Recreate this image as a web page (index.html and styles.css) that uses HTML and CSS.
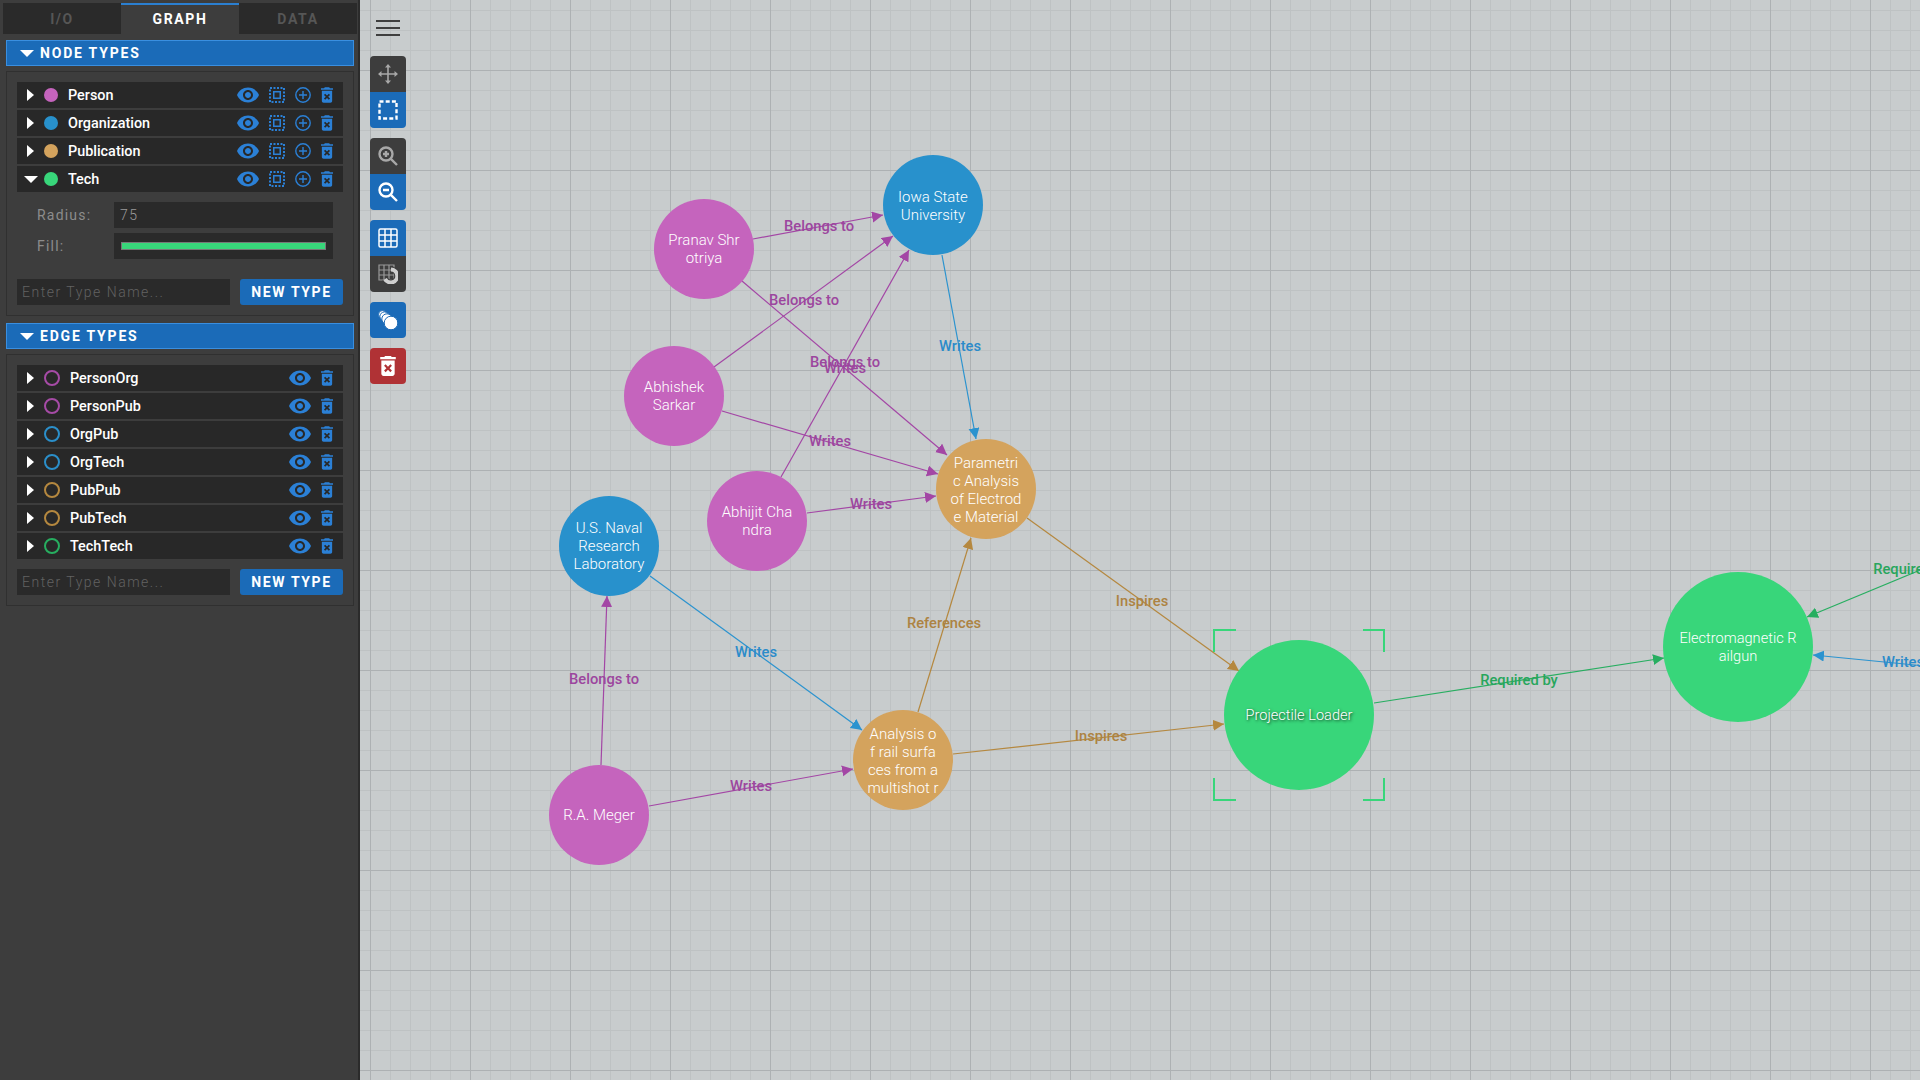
FILE: index.html
```html
<!DOCTYPE html>
<html lang="en">
<head>
    <meta charset="UTF-8">
    <meta name="viewport" content="width=device-width, initial-scale=1.0">
    <title>Graph Editor</title>
    <link rel="stylesheet" href="styles.css">
</head>
<body>
  <svg class="sprite" aria-hidden="true">
    <symbol id="i-eye" viewBox="1 4 22 16">
      <path d="M12 4.5C7 4.5 2.73 7.61 1 12c1.73 4.39 6 7.5 11 7.5s9.27-3.11 11-7.5c-1.73-4.39-6-7.5-11-7.5zM12 17c-2.76 0-5-2.24-5-5s2.24-5 5-5 5 2.24 5 5-2.24 5-5 5zm0-8c-1.66 0-3 1.34-3 3s1.34 3 3 3 3-1.34 3-3-1.34-3-3-3z"/>
    </symbol>
    <symbol id="i-focus" viewBox="0 0 16 16">
      <rect x="1" y="1" width="14" height="14" fill="none" stroke="currentColor" stroke-width="2" stroke-dasharray="2 1.5"/>
      <rect x="4.75" y="4.75" width="6.5" height="6.5" fill="none" stroke="currentColor" stroke-width="1.5"/>
    </symbol>
    <symbol id="i-plus" viewBox="0 0 16 16">
      <circle cx="8" cy="8" r="7.2" fill="none" stroke="currentColor" stroke-width="1.4"/>
      <path d="M8 4v8M4 8h8" fill="none" stroke="currentColor" stroke-width="1.4"/>
    </symbol>
    <symbol id="i-trash" viewBox="5 3 14 18">
      <path fill-rule="evenodd" d="M6 19c0 1.1.9 2 2 2h8c1.1 0 2-.9 2-2V7H6v12zm2.46-7.12l1.41-1.41L12 12.59l2.12-2.12 1.41 1.41L13.41 14l2.12 2.12-1.41 1.41L12 15.41l-2.12 2.12-1.41-1.41L10.59 14l-2.13-2.12zM15.5 4l-1-1h-5l-1 1H5v2h14V4z"/>
    </symbol>
  </svg>

  <aside class="panel">
    <div class="tabs">
      <div class="tab">I/O</div>
      <div class="tab active">GRAPH</div>
      <div class="tab">DATA</div>
    </div>

    <div class="section-head"><span class="caret-down"></span>NODE TYPES</div>
    <div class="group">
      <div class="rows">
        <div class="type-row">
          <span class="caret-box"><span class="caret-right"></span></span>
          <span class="dot person"></span><span class="type-name">Person</span>
          <div class="row-icons">
            <svg class="ic-eye"><use href="#i-eye"/></svg><svg class="ic-16"><use href="#i-focus"/></svg><svg class="ic-16"><use href="#i-plus"/></svg><svg class="ic-trash"><use href="#i-trash"/></svg>
          </div>
        </div>
        <div class="type-row">
          <span class="caret-box"><span class="caret-right"></span></span>
          <span class="dot org"></span><span class="type-name">Organization</span>
          <div class="row-icons">
            <svg class="ic-eye"><use href="#i-eye"/></svg><svg class="ic-16"><use href="#i-focus"/></svg><svg class="ic-16"><use href="#i-plus"/></svg><svg class="ic-trash"><use href="#i-trash"/></svg>
          </div>
        </div>
        <div class="type-row">
          <span class="caret-box"><span class="caret-right"></span></span>
          <span class="dot pub"></span><span class="type-name">Publication</span>
          <div class="row-icons">
            <svg class="ic-eye"><use href="#i-eye"/></svg><svg class="ic-16"><use href="#i-focus"/></svg><svg class="ic-16"><use href="#i-plus"/></svg><svg class="ic-trash"><use href="#i-trash"/></svg>
          </div>
        </div>
        <div class="type-row">
          <span class="caret-box"><span class="caret-down small"></span></span>
          <span class="dot tech"></span><span class="type-name">Tech</span>
          <div class="row-icons">
            <svg class="ic-eye"><use href="#i-eye"/></svg><svg class="ic-16"><use href="#i-focus"/></svg><svg class="ic-16"><use href="#i-plus"/></svg><svg class="ic-trash"><use href="#i-trash"/></svg>
          </div>
        </div>
      </div>

      <div class="prop-row first">
        <label class="prop-label">Radius:</label>
        <input class="prop-input" type="text" value="75">
      </div>
      <div class="prop-row">
        <label class="prop-label">Fill:</label>
        <div class="prop-input swatch"><div class="swatch-bar"></div></div>
      </div>

      <div class="new-type">
        <input class="name-input" type="text" placeholder="Enter Type Name...">
        <button class="new-btn">NEW TYPE</button>
      </div>
    </div>

    <div class="section-head second"><span class="caret-down"></span>EDGE TYPES</div>
    <div class="group">
      <div class="rows">
        <div class="type-row">
          <span class="caret-box"><span class="caret-right"></span></span>
          <span class="ring e-person"></span><span class="type-name">PersonOrg</span>
          <div class="row-icons"><svg class="ic-eye"><use href="#i-eye"/></svg><svg class="ic-trash"><use href="#i-trash"/></svg></div>
        </div>
        <div class="type-row">
          <span class="caret-box"><span class="caret-right"></span></span>
          <span class="ring e-person"></span><span class="type-name">PersonPub</span>
          <div class="row-icons"><svg class="ic-eye"><use href="#i-eye"/></svg><svg class="ic-trash"><use href="#i-trash"/></svg></div>
        </div>
        <div class="type-row">
          <span class="caret-box"><span class="caret-right"></span></span>
          <span class="ring e-org"></span><span class="type-name">OrgPub</span>
          <div class="row-icons"><svg class="ic-eye"><use href="#i-eye"/></svg><svg class="ic-trash"><use href="#i-trash"/></svg></div>
        </div>
        <div class="type-row">
          <span class="caret-box"><span class="caret-right"></span></span>
          <span class="ring e-org"></span><span class="type-name">OrgTech</span>
          <div class="row-icons"><svg class="ic-eye"><use href="#i-eye"/></svg><svg class="ic-trash"><use href="#i-trash"/></svg></div>
        </div>
        <div class="type-row">
          <span class="caret-box"><span class="caret-right"></span></span>
          <span class="ring e-pub"></span><span class="type-name">PubPub</span>
          <div class="row-icons"><svg class="ic-eye"><use href="#i-eye"/></svg><svg class="ic-trash"><use href="#i-trash"/></svg></div>
        </div>
        <div class="type-row">
          <span class="caret-box"><span class="caret-right"></span></span>
          <span class="ring e-pub"></span><span class="type-name">PubTech</span>
          <div class="row-icons"><svg class="ic-eye"><use href="#i-eye"/></svg><svg class="ic-trash"><use href="#i-trash"/></svg></div>
        </div>
        <div class="type-row">
          <span class="caret-box"><span class="caret-right"></span></span>
          <span class="ring e-tech"></span><span class="type-name">TechTech</span>
          <div class="row-icons"><svg class="ic-eye"><use href="#i-eye"/></svg><svg class="ic-trash"><use href="#i-trash"/></svg></div>
        </div>
      </div>

      <div class="new-type near">
        <input class="name-input" type="text" placeholder="Enter Type Name...">
        <button class="new-btn">NEW TYPE</button>
      </div>
    </div>
  </aside>

  <main class="canvas">
    <!-- viewBox starts at the panel edge so the graph uses page coordinates -->
    <svg class="graph" viewBox="360 0 1560 1080">
      <defs>
        <marker id="arrow-person" markerUnits="userSpaceOnUse" markerWidth="12" markerHeight="12" refX="11" refY="5.5" orient="auto"><path class="m-person" d="M0 0L11 5.5L0 11z"/></marker>
        <marker id="arrow-org" markerUnits="userSpaceOnUse" markerWidth="12" markerHeight="12" refX="11" refY="5.5" orient="auto"><path class="m-org" d="M0 0L11 5.5L0 11z"/></marker>
        <marker id="arrow-pub" markerUnits="userSpaceOnUse" markerWidth="12" markerHeight="12" refX="11" refY="5.5" orient="auto"><path class="m-pub" d="M0 0L11 5.5L0 11z"/></marker>
        <marker id="arrow-tech" markerUnits="userSpaceOnUse" markerWidth="12" markerHeight="12" refX="11" refY="5.5" orient="auto"><path class="m-tech" d="M0 0L11 5.5L0 11z"/></marker>
      </defs>

      <!-- edges -->
      <line class="edge person" x1="753" y1="239" x2="883" y2="215" marker-end="url(#arrow-person)"/>
      <line class="edge person" x1="714" y1="367" x2="893" y2="236" marker-end="url(#arrow-person)"/>
      <line class="edge person" x1="742" y1="281" x2="947" y2="455" marker-end="url(#arrow-person)"/>
      <line class="edge person" x1="781" y1="477" x2="909" y2="250" marker-end="url(#arrow-person)"/>
      <line class="edge org" x1="942" y1="255" x2="976" y2="439" marker-end="url(#arrow-org)"/>
      <line class="edge person" x1="722" y1="411" x2="938" y2="474" marker-end="url(#arrow-person)"/>
      <line class="edge person" x1="807" y1="513" x2="936" y2="496" marker-end="url(#arrow-person)"/>
      <line class="edge org" x1="650" y1="576" x2="862" y2="730" marker-end="url(#arrow-org)"/>
      <line class="edge person" x1="601" y1="765" x2="607" y2="596" marker-end="url(#arrow-person)"/>
      <line class="edge person" x1="649" y1="806" x2="853" y2="769" marker-end="url(#arrow-person)"/>
      <line class="edge pub" x1="918" y1="712" x2="971" y2="538" marker-end="url(#arrow-pub)"/>
      <line class="edge pub" x1="953" y1="754" x2="1224" y2="724" marker-end="url(#arrow-pub)"/>
      <line class="edge pub" x1="1027" y1="518" x2="1239" y2="671" marker-end="url(#arrow-pub)"/>
      <line class="edge tech" x1="1374" y1="703" x2="1664" y2="658" marker-end="url(#arrow-tech)"/>
      <line class="edge tech" x1="1925" y1="568" x2="1807" y2="617" marker-end="url(#arrow-tech)"/>
      <line class="edge org" x1="1925" y1="666" x2="1813" y2="655" marker-end="url(#arrow-org)"/>

      <!-- edge labels -->
      <text class="edge-label person" x="819" y="231">Belongs to</text>
      <text class="edge-label person" x="804" y="305">Belongs to</text>
      <text class="edge-label person" x="845" y="373">Writes</text>
      <text class="edge-label person" x="845" y="367">Belongs to</text>
      <text class="edge-label org" x="960" y="351">Writes</text>
      <text class="edge-label person" x="830" y="446">Writes</text>
      <text class="edge-label person" x="871" y="509">Writes</text>
      <text class="edge-label org" x="756" y="657">Writes</text>
      <text class="edge-label person" x="604" y="684">Belongs to</text>
      <text class="edge-label person" x="751" y="791">Writes</text>
      <text class="edge-label pub" x="944" y="628">References</text>
      <text class="edge-label pub" x="1101" y="741">Inspires</text>
      <text class="edge-label pub" x="1142" y="606">Inspires</text>
      <text class="edge-label tech" x="1519" y="685">Required by</text>
      <text class="edge-label tech" x="1912" y="574">Required by</text>
      <text class="edge-label org" x="1903" y="667">Writes</text>

      <!-- nodes -->
      <circle class="node org" cx="933" cy="205" r="50"/>
      <text class="node-label"><tspan x="933" y="202">Iowa State</tspan><tspan x="933" y="220">University</tspan></text>

      <circle class="node person" cx="704" cy="249" r="50"/>
      <text class="node-label"><tspan x="704" y="245">Pranav Shr</tspan><tspan x="704" y="263">otriya</tspan></text>

      <circle class="node person" cx="674" cy="396" r="50"/>
      <text class="node-label"><tspan x="674" y="392">Abhishek</tspan><tspan x="674" y="410">Sarkar</tspan></text>

      <circle class="node person" cx="757" cy="521" r="50"/>
      <text class="node-label"><tspan x="757" y="517">Abhijit Cha</tspan><tspan x="757" y="535">ndra</tspan></text>

      <circle class="node org" cx="609" cy="546" r="50"/>
      <text class="node-label"><tspan x="609" y="533">U.S. Naval</tspan><tspan x="609" y="551">Research</tspan><tspan x="609" y="569">Laboratory</tspan></text>

      <circle class="node pub" cx="986" cy="489" r="50"/>
      <text class="node-label"><tspan x="986" y="468">Parametri</tspan><tspan x="986" y="486">c Analysis</tspan><tspan x="986" y="504">of Electrod</tspan><tspan x="986" y="522">e Material</tspan></text>

      <circle class="node pub" cx="903" cy="760" r="50"/>
      <text class="node-label"><tspan x="903" y="739">Analysis o</tspan><tspan x="903" y="757">f rail surfa</tspan><tspan x="903" y="775">ces from a</tspan><tspan x="903" y="793">multishot r</tspan></text>

      <circle class="node person" cx="599" cy="815" r="50"/>
      <text class="node-label"><tspan x="599" y="820">R.A. Meger</tspan></text>

      <circle class="node tech" cx="1299" cy="715" r="75"/>
      <text class="node-label selected"><tspan x="1299" y="720">Projectile Loader</tspan></text>

      <circle class="node tech" cx="1738" cy="647" r="75"/>
      <text class="node-label tech-name"><tspan x="1738" y="643">Electromagnetic R</tspan><tspan x="1738" y="661">ailgun</tspan></text>

      <!-- selection corners -->
      <path class="select-box" d="M1214 652v-22h22M1363 630h21v22M1214 778v22h22M1363 800h21v-22"/>
    </svg>

    <div class="toolbar">
      <div class="menu-btn"><span></span><span></span><span></span></div>

      <div class="tool-group">
        <div class="tool">
          <svg viewBox="0 0 20 20" width="20" height="20" class="grey-stroke"><path d="M10 2v16M2 10h16"/><path class="solid" d="M10 0l3 3.5H7zM10 20l3-3.5H7zM0 10l3.5-3v6zM20 10l-3.5-3v6z"/></svg>
        </div>
        <div class="tool on">
          <svg viewBox="0 0 20 20" width="20" height="20"><rect class="white-dash" x="1.5" y="1.5" width="17" height="17"/></svg>
        </div>
      </div>

      <div class="tool-group">
        <div class="tool">
          <svg viewBox="0 0 20 20" width="20" height="20" class="grey-stroke thick"><circle cx="8" cy="8" r="6.5"/><path d="M12.6 12.6L19 19M5 8h6M8 5v6"/></svg>
        </div>
        <div class="tool on">
          <svg viewBox="0 0 20 20" width="20" height="20" class="white-stroke thick"><circle cx="8" cy="8" r="6.5"/><path d="M12.6 12.6L19 19M5 8h6"/></svg>
        </div>
      </div>

      <div class="tool-group">
        <div class="tool on">
          <svg viewBox="0 0 20 20" width="20" height="20" class="white-stroke"><rect x="1" y="1" width="18" height="18" rx="1.5"/><path d="M7 1v18M13 1v18M1 7h18M1 13h18"/></svg>
        </div>
        <div class="tool">
          <svg viewBox="0 0 20 20" width="20" height="20"><path class="snap-grid" d="M1 1h15v15H1zM6 1v15M11 1v15M1 6h15M1 11h15"/><path class="snap-halo" d="M13 5.5A6.5 6.5 0 1 1 7 15"/><path class="snap-magnet" d="M13 5.5A6.5 6.5 0 1 1 7 15"/></svg>
        </div>
      </div>

      <div class="tool-group">
        <div class="tool on single">
          <svg viewBox="0 0 24 24" width="24" height="24" class="stack"><circle cx="6.5" cy="6.5" r="4"/><circle cx="8.5" cy="8.5" r="4.6"/><circle cx="11" cy="11" r="5.2"/><circle cx="15" cy="15" r="6.8"/></svg>
        </div>
      </div>

      <div class="tool-group">
        <div class="tool danger single">
          <svg width="16" height="20" class="white-fill"><use href="#i-trash"/></svg>
        </div>
      </div>
    </div>
  </main>
</body>
</html>
```

FILE: styles.css
```css
* {
  box-sizing: border-box;
}
html, body {
  height: 100%;
}
body {
  margin: 0;
  display: flex;
  overflow: hidden;
  font-family: Roboto, "Liberation Sans", sans-serif;
  background-color: #c8cccd;
}
.sprite {
  display: none;
}

/* left panel */
.panel {
  width: 360px;
  flex: none;
  height: 100%;
  background-color: #3d3d3d;
  border-right: 2px solid #2b2b2b;
}
.tabs {
  display: flex;
  height: 34px;
  padding: 3px 1px 0 3px;
  background-color: #3d3d3d;
}
.tab {
  width: 118px;
  background-color: #2a2a2a;
  color: #565656;
  font-size: 14px;
  font-weight: 700;
  letter-spacing: 1.6px;
  line-height: 32px;
  text-align: center;
}
.tab.active {
  background-color: #3d3d3d;
  border-top: 2px solid #2b7fd0;
  color: #fff;
  line-height: 29px;
}
.section-head {
  display: flex;
  align-items: center;
  height: 26px;
  margin: 6px 4px 0 6px;
  padding-left: 13px;
  background-color: #1b6bb8;
  border: 1px solid #3a8fe0;
  color: #fff;
  font-size: 14px;
  font-weight: 700;
  letter-spacing: 1.8px;
}
.section-head.second {
  margin-top: 7px;
}
.section-head .caret-down {
  margin-right: 6px;
}
.caret-down {
  display: inline-block;
  width: 0;
  height: 0;
  border-left: 7px solid transparent;
  border-right: 7px solid transparent;
  border-top: 7px solid #fff;
}
.caret-right {
  display: inline-block;
  width: 0;
  height: 0;
  border-top: 6px solid transparent;
  border-bottom: 6px solid transparent;
  border-left: 7px solid #fff;
}
.group {
  margin: 5px 4px 0 6px;
  padding: 10px;
  border: 1px solid #303030;
}
.rows {
  display: flex;
  flex-direction: column;
  gap: 2px;
}
.type-row {
  display: flex;
  align-items: center;
  height: 26px;
  background-color: #282828;
  padding-right: 10px;
}
.caret-box {
  display: flex;
  justify-content: center;
  align-items: center;
  width: 27px;
  flex: none;
}
.dot {
  width: 14px;
  height: 14px;
  border-radius: 50%;
}
.dot.person { background-color: #c564bd; }
.dot.org { background-color: #2891cc; }
.dot.pub { background-color: #d4a35d; }
.dot.tech { background-color: #38d67a; }
.ring {
  width: 16px;
  height: 16px;
  border-radius: 50%;
  border: 2px solid;
}
.ring.e-person { border-color: #a64ba6; }
.ring.e-org { border-color: #2b8fca; }
.ring.e-pub { border-color: #b5883f; }
.ring.e-tech { border-color: #27ae60; }
.type-name {
  margin-left: 10px;
  color: #fff;
  font-size: 14.4px;
  font-weight: 500;
}
.row-icons {
  display: flex;
  align-items: center;
  gap: 10px;
  margin-left: auto;
  color: #2b80d6;
}
.row-icons svg {
  fill: currentColor;
}
.ic-eye {
  width: 22px;
  height: 16px;
}
.ic-16 {
  width: 16px;
  height: 16px;
}
.ic-trash {
  width: 12px;
  height: 16px;
}
.prop-row {
  display: flex;
  align-items: center;
  margin-top: 5px;
  padding: 0 10px 0 20px;
}
.prop-row.first {
  margin-top: 10px;
}
.prop-label {
  width: 77px;
  flex: none;
  color: #8c8c8c;
  font-size: 14px;
  letter-spacing: 1.2px;
}
.prop-input {
  width: 219px;
  height: 26px;
  padding: 0 6px;
  background-color: #2a2a2a;
  border: 0;
  color: #9a9a9a;
  font-family: inherit;
  font-size: 14px;
  font-weight: 300;
  letter-spacing: 1.4px;
}
.swatch {
  display: flex;
  align-items: center;
  padding: 0 7px;
}
.swatch-bar {
  width: 100%;
  height: 8px;
  background-color: #38d67a;
  border: 1px solid #777;
}
.new-type {
  display: flex;
  gap: 10px;
  margin-top: 20px;
}
.new-type.near {
  margin-top: 10px;
}
.name-input {
  width: 213px;
  height: 26px;
  padding: 0 5px;
  background-color: #2a2a2a;
  border: 0;
  color: #ccc;
  font-family: inherit;
  font-size: 14px;
  font-weight: 300;
  letter-spacing: 1.5px;
}
.name-input::placeholder {
  color: #626262;
  opacity: 1;
}
.new-btn {
  width: 103px;
  height: 26px;
  padding: 0;
  background-color: #1b6bb8;
  border: 0;
  border-radius: 3px;
  color: #fff;
  font-family: inherit;
  font-size: 14px;
  font-weight: 700;
  letter-spacing: 1.6px;
}

/* graph canvas */
.canvas {
  position: relative;
  flex: 1;
  height: 100%;
  padding: 20px 10px;
  background-color: #c8cccd;
  background-image:
    linear-gradient(to right, #adb1b3 1px, transparent 1px),
    linear-gradient(to bottom, #adb1b3 1px, transparent 1px),
    linear-gradient(to right, #bec2c3 1px, transparent 1px),
    linear-gradient(to bottom, #bec2c3 1px, transparent 1px);
  background-size: 100px 100px, 100px 100px, 20px 20px, 20px 20px;
  background-position: 10px 70px, 10px 70px, 10px 10px, 10px 10px;
}
.graph {
  position: absolute;
  left: 0;
  top: 0;
  width: 1560px;
  height: 1080px;
}
.edge {
  stroke-width: 1.2;
}
.edge.person { stroke: #a346a5; }
.edge.org { stroke: #2b93cf; }
.edge.pub { stroke: #b5883f; }
.edge.tech { stroke: #27ae60; }
.m-person { fill: #a346a5; }
.m-org { fill: #2b93cf; }
.m-pub { fill: #b5883f; }
.m-tech { fill: #27ae60; }
.edge-label {
  font-size: 14.7px;
  font-weight: 500;
  text-anchor: middle;
}
.edge-label.person { fill: #9c469e; }
.edge-label.org { fill: #2b8bca; }
.edge-label.pub { fill: #ad8342; }
.edge-label.tech { fill: #27a65c; }
.node.person { fill: #c564bd; }
.node.org { fill: #2891cc; }
.node.pub { fill: #d4a35d; }
.node.tech { fill: #38d67a; }
.node-label {
  fill: #fff;
  font-size: 15px;
  font-weight: 300;
  text-anchor: middle;
}
.node-label.selected {
  font-size: 14.6px;
  text-shadow: 1px 1px 3px rgba(0, 0, 0, 0.8);
}
.node-label.tech-name {
  font-size: 14.6px;
}
.select-box {
  fill: none;
  stroke: #38d67a;
  stroke-width: 2;
}

/* toolbar */
.toolbar {
  position: relative;
  display: flex;
  flex-direction: column;
  gap: 10px;
  width: 36px;
}
.menu-btn {
  display: flex;
  flex-direction: column;
  gap: 5px;
  align-items: center;
  height: 26px;
}
.menu-btn span {
  width: 24px;
  height: 2px;
  background-color: #3f3f3f;
}
.tool-group {
  display: flex;
  flex-direction: column;
  border-radius: 4px;
  overflow: hidden;
}
.tool {
  display: flex;
  align-items: center;
  justify-content: center;
  width: 36px;
  height: 36px;
  background-color: #3d3d3d;
}
.tool.on {
  background-color: #1b6bb8;
}
.tool.danger {
  background-color: #b03235;
}
.grey-stroke {
  fill: none;
  stroke: #a8a8a8;
  stroke-width: 1.6;
}
.grey-stroke .solid {
  fill: #a8a8a8;
  stroke: none;
}
.grey-stroke.thick,
.white-stroke.thick {
  stroke-width: 2.4;
}
.white-stroke {
  fill: none;
  stroke: #fff;
  stroke-width: 1.5;
}
.white-dash {
  fill: none;
  stroke: #fff;
  stroke-width: 2.4;
  stroke-dasharray: 4 2.2;
}
.snap-grid {
  fill: none;
  stroke: #999;
  stroke-width: 1.2;
}
.snap-halo {
  fill: none;
  stroke: #3d3d3d;
  stroke-width: 6;
}
.snap-magnet {
  fill: none;
  stroke: #cfcfcf;
  stroke-width: 4;
}
.stack circle {
  fill: #fff;
  stroke: #1b6bb8;
  stroke-width: 1;
}
.white-fill {
  fill: #fff;
}
```
